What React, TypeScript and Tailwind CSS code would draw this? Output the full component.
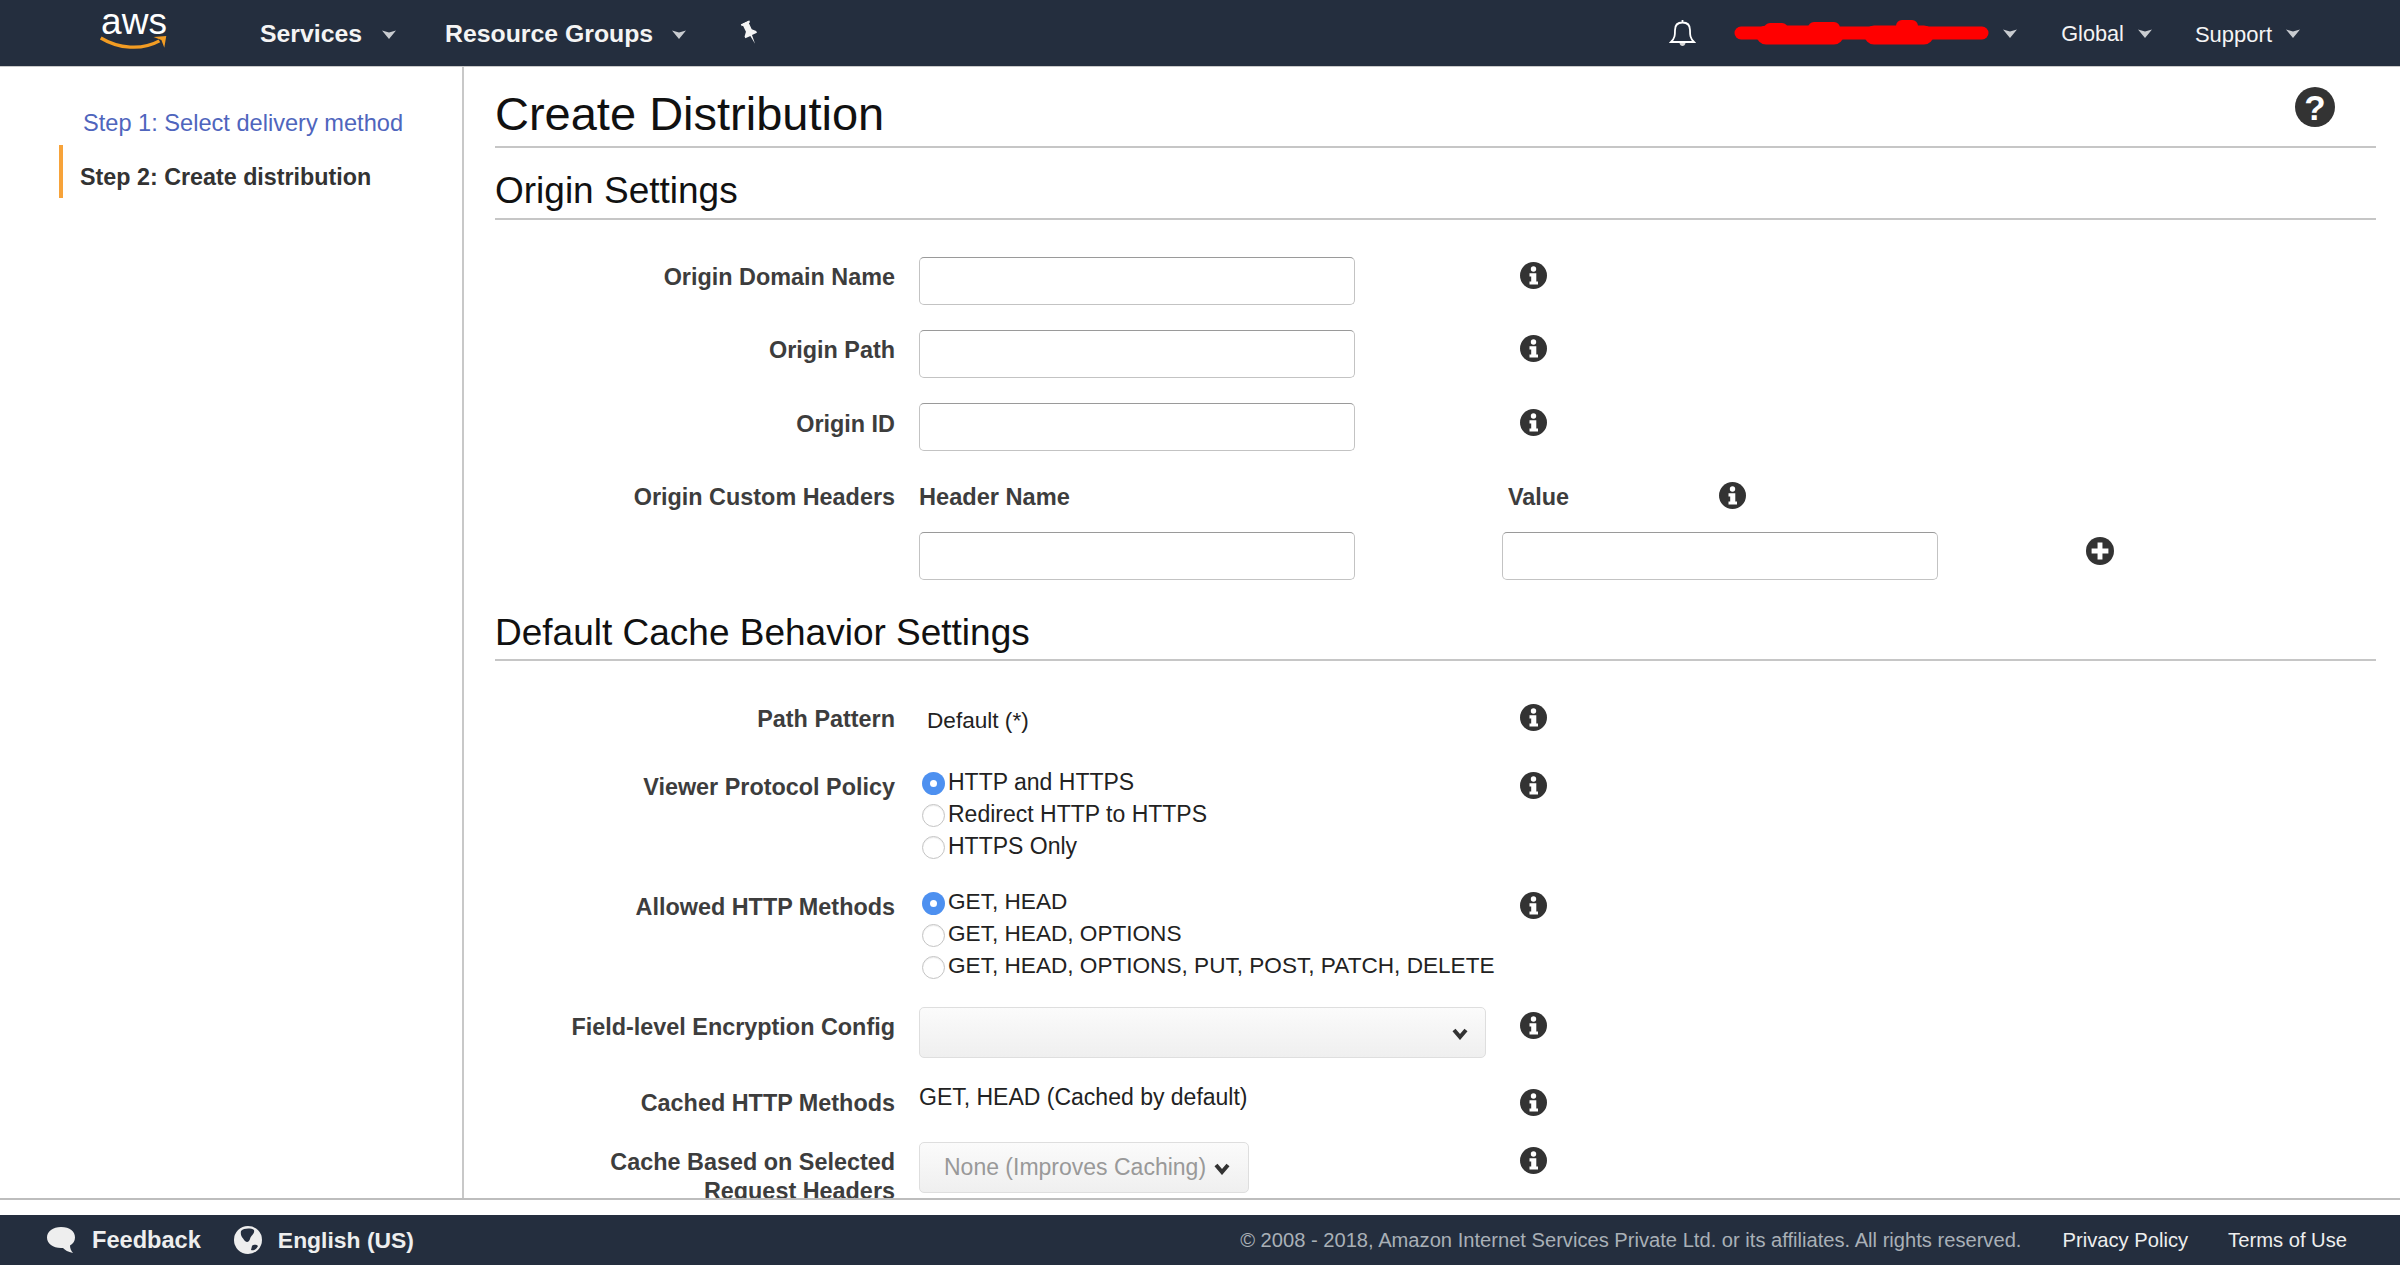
function Caret({ className = "" }: { className?: string }) {
  return (
    <svg width="14" height="9" viewBox="0 0 14 9" className={className}>
      <path d="M0 0.5 L7 2.5 L14 0.5 L7 9 Z" fill="#c9ccd0" />
    </svg>
  );
}

function Chevron() {
  return (
    <svg width="18" height="12" viewBox="0 0 18 12" className="shrink-0">
      <path d="M3 2 L9 9 L15 2" fill="none" stroke="#333" strokeWidth="4" />
    </svg>
  );
}

function Info() {
  return (
    <svg width="27" height="27" viewBox="0 0 27 27" className="block">
      <circle cx="13.5" cy="13.5" r="13.5" fill="#333" />
      <circle cx="13.5" cy="7" r="2.7" fill="#fff" />
      <path d="M9.5 11.2 H16.3 V19.4 H18 V22.6 H9.5 V19.4 H11.2 V14.4 H9.5 Z" fill="#fff" />
    </svg>
  );
}

function Circled({ size, className = "", children }: { size: number; className?: string; children: React.ReactNode }) {
  return (
    <svg width={size} height={size} viewBox="0 0 40 40" className={className}>
      <circle cx="20" cy="20" r="20" fill="#333" />
      {children}
    </svg>
  );
}

function Radio({ checked = false }: { checked?: boolean }) {
  if (checked) {
    return (
      <span className="w-[23px] h-[23px] rounded-full bg-[#4d90f0] flex items-center justify-center shrink-0">
        <span className="w-[7px] h-[7px] rounded-full bg-white" />
      </span>
    );
  }
  return <span className="w-[23px] h-[23px] rounded-full border border-[#c4c4c4] bg-white shadow-[inset_0_1px_1px_rgba(0,0,0,0.08)] shrink-0" />;
}

function RadioList({ items, textSize }: { items: string[]; textSize: string }) {
  return (
    <div className="flex flex-col gap-[2px]">
      {items.map((item, index) => (
        <div key={item} className={`flex items-center h-[30px] ml-[3px] leading-[30px] text-[#222] ${textSize}`}>
          <Radio checked={index === 0} />
          <span className="ml-[3px] mb-[3px] whitespace-nowrap">{item}</span>
        </div>
      ))}
    </div>
  );
}

function TextBox({ width }: { width: string }) {
  return <input className={`${width} h-[48px] block rounded-[5px] border border-[#c3c3c3] border-t-[#9a9a9a] bg-white`} />;
}

function SectionTitle({ title, pt, pb }: { title: string; pt: string; pb: string }) {
  return (
    <div className={`${pt} ${pb} border-b-[2px] border-[#c6c6c6]`}>
      <h2 className="text-[37px] leading-[44px] text-[#111]">{title}</h2>
    </div>
  );
}

function Row({ label, top, labelPt, infoPt, children }: { label: React.ReactNode; top: string; labelPt: string; infoPt: string; children: React.ReactNode }) {
  return (
    <div className={`flex items-start ${top}`}>
      <div className={`w-[400px] shrink-0 text-right font-bold text-[23.4px] leading-[30px] text-[#3d3d3d] ${labelPt}`}>{label}</div>
      <div className="ml-[24px] w-[601px] shrink-0">{children}</div>
      <div className={infoPt}>
        <Info />
      </div>
    </div>
  );
}

function TopBar() {
  return (
    <header className="h-[67px] shrink-0 bg-[#242e3e] border-b border-[#c9c9c9] flex items-center pl-[100px] pr-[100px] text-[#f4f4f4]">
      <div className="w-[68px] h-[42px] mb-[6px] flex flex-col items-center">
        <span className="text-[37px] leading-[26px] text-white h-[28px]">aws</span>
        <svg width="68" height="16" viewBox="0 0 68 16" className="-mt-[1px]">
          <path d="M0 3 C18 14 42 16 60 6" fill="none" stroke="#f29c23" strokeWidth="3.4" />
          <path d="M54 2 L67 1 L65 13 L62 5 Z" fill="#f29c23" />
        </svg>
      </div>
      <span className="ml-[92px] pt-[2px] font-bold text-[24.8px]">Services</span>
      <Caret className="ml-[20px] mt-[2px]" />
      <span className="ml-[49px] pt-[2px] font-bold text-[24.8px]">Resource Groups</span>
      <Caret className="ml-[19px] mt-[2px]" />
      <svg width="22" height="24" viewBox="0 0 24 26" className="ml-[53px] -rotate-[25deg]">
        <path d="M7 0 H17 V2.5 H15.5 V10 L19 14 V16 H13 L12 26 L11 16 H5 V14 L8.5 10 V2.5 H7 Z" fill="#f4f4f4" />
      </svg>
      <svg width="27" height="28" viewBox="0 0 27 28" className="ml-auto">
        <path d="M2 23 C6 19 6 16 6 11 C6 6 9 3.5 13.5 3.5 C18 3.5 21 6 21 11 C21 16 21 19 25 23 Z M13.5 1 V3.5" fill="none" stroke="#fff" strokeWidth="1.8" />
        <path d="M10.5 24 H16.5 C16 28 11 28 10.5 24 Z" fill="#d8d8d8" />
      </svg>
      <svg width="255" height="26" viewBox="0 0 255 26" className="ml-[38px]">
        <path d="M7 13 H248" fill="none" stroke="#ff0000" strokeWidth="13" strokeLinecap="round" />
        <path d="M32 15 H100 M140 15 H190" fill="none" stroke="#ff0000" strokeWidth="19" strokeLinecap="round" />
        <path d="M36 9 H48 M80 8 H100 M168 6 H178" fill="none" stroke="#ff0000" strokeWidth="12" strokeLinecap="round" />
      </svg>
      <Caret className="ml-[14px]" />
      <span className="ml-[44px] text-[21.7px] pt-[2px]">Global</span>
      <Caret className="ml-[14px]" />
      <span className="ml-[43px] text-[22px] pt-[2px]">Support</span>
      <Caret className="ml-[14px]" />
    </header>
  );
}

function SideNav() {
  return (
    <aside className="w-[464px] shrink-0 border-r-[2px] border-[#c8c8c8] pt-[41px]">
      <a className="block ml-[83px] text-[23.6px] leading-[30px] text-[#4f65bd]">Step 1: Select delivery method</a>
      <div className="ml-[59px] mt-[7px] h-[53px] pl-[17px] pt-[11px] border-l-[4px] border-[#f7a33a] flex items-center font-bold text-[23.3px] text-[#333]">
        Step 2: Create distribution
      </div>
    </aside>
  );
}

function Form() {
  return (
    <div className="flex-1 min-w-0 pl-[31px] pr-[24px]">
      <div className="h-[81px] pt-[19px] border-b-[2px] border-[#c6c6c6] flex justify-between items-start">
        <h1 className="text-[47px] leading-[56px] text-[#111]">Create Distribution</h1>
        <Circled size={40} className="mt-[1px] mr-[41px]">
          <text x="20" y="33" textAnchor="middle" fontSize="35" fontWeight="700" fill="#fff">?</text>
        </Circled>
      </div>
      <SectionTitle title="Origin Settings" pt="pt-[21px]" pb="pb-[5px]" />

      <Row label="Origin Domain Name" top="mt-[37px]" labelPt="pt-[5px]" infoPt="pt-[5px]">
        <TextBox width="w-[436px]" />
      </Row>
      <Row label="Origin Path" top="mt-[25px]" labelPt="pt-[5px]" infoPt="pt-[5px]">
        <TextBox width="w-[436px]" />
      </Row>
      <Row label="Origin ID" top="mt-[25px]" labelPt="pt-[6px]" infoPt="pt-[6px]">
        <TextBox width="w-[436px]" />
      </Row>

      <div className="flex items-start mt-[25px] pt-[6px] h-[56px] text-[23.4px] leading-[30px] font-bold text-[#3d3d3d]">
        <div className="w-[400px] text-right shrink-0">Origin Custom Headers</div>
        <div className="ml-[24px] w-[589px] shrink-0 text-[23.6px]">Header Name</div>
        <div className="w-[211px] shrink-0">Value</div>
        <Info />
      </div>
      <div className="flex items-center ml-[424px]">
        <TextBox width="w-[436px]" />
        <div className="ml-[147px]">
          <TextBox width="w-[436px]" />
        </div>
        <Circled size={28} className="ml-[148px] -mt-[11px]">
          <path d="M16.5 8 H23.5 V16.5 H32 V23.5 H23.5 V32 H16.5 V23.5 H8 V16.5 H16.5 Z" fill="#fff" />
        </Circled>
      </div>

      <SectionTitle title="Default Cache Behavior Settings" pt="pt-[31px]" pb="pb-[4px]" />

      <Row label="Path Pattern" top="mt-[43px]" labelPt="" infoPt="">
        <div className="ml-[8px] mt-[2px] text-[22.6px] leading-[30px] text-[#222]">Default (*)</div>
      </Row>
      <Row label="Viewer Protocol Policy" top="mt-[32px]" labelPt="pt-[4px]" infoPt="pt-[4px]">
        <RadioList textSize="text-[23px]" items={["HTTP and HTTPS", "Redirect HTTP to HTTPS", "HTTPS Only"]} />
      </Row>
      <Row label="Allowed HTTP Methods" top="mt-[26px]" labelPt="pt-[4px]" infoPt="pt-[4px]">
        <RadioList textSize="text-[22.6px]" items={["GET, HEAD", "GET, HEAD, OPTIONS", "GET, HEAD, OPTIONS, PUT, POST, PATCH, DELETE"]} />
      </Row>
      <Row label="Field-level Encryption Config" top="mt-[25px]" labelPt="pt-[5px]" infoPt="pt-[5px]">
        <div className="w-[567px] h-[51px] rounded-[5px] border border-[#dedede] bg-gradient-to-b from-[#fbfbfb] to-[#efefef] flex items-center justify-end pr-[16px] pt-[3px]">
          <Chevron />
        </div>
      </Row>
      <Row label="Cached HTTP Methods" top="mt-[24px]" labelPt="pt-[6px]" infoPt="pt-[7px]">
        <div className="text-[23px] leading-[30px] text-[#222]">GET, HEAD (Cached by default)</div>
      </Row>
      <Row
        label={
          <span className="block leading-[29px]">
            Cache Based on Selected
            <br />
            Request Headers
          </span>
        }
        top="mt-[24px]"
        labelPt="pt-[6px]"
        infoPt="pt-[5px]"
      >
        <div className="w-[330px] h-[51px] rounded-[5px] border border-[#dedede] bg-gradient-to-b from-[#fbfbfb] to-[#efefef] flex items-center pl-[24px] text-[23px] text-[#999]">
          <span className="whitespace-nowrap">None (Improves Caching)</span>
          <span className="ml-[7px] pt-[3px]">
            <Chevron />
          </span>
        </div>
      </Row>
    </div>
  );
}

function Footer() {
  return (
    <footer className="mt-[15px] h-[50px] shrink-0 bg-[#242e3e] flex items-center pl-[47px] pr-[53px] text-[#eeeeee]">
      <svg width="28" height="26" viewBox="0 0 28 26">
        <path d="M14 0 C23 0 28 4.5 28 10.5 C28 14 26 17 23 18.5 C23 21 24 24 26 26 C21 25 18 23 16 21 H14 C6 21 0 16.5 0 10.5 C0 4.5 6 0 14 0 Z" fill="#eeeeee" />
      </svg>
      <span className="ml-[17px] pt-[1px] font-bold text-[23.6px]">Feedback</span>
      <svg width="28" height="28" viewBox="0 0 28 28" className="ml-[33px]">
        <circle cx="14" cy="14" r="14" fill="#eeeeee" />
        <path d="M7 5 C10 2 17 2 20 4 C21 8 17 9 16 13 C15 16 13 17 11 15 C9 12 6 10 7 5 Z M18 20 C20 18 23 19 24 20 C22 24 19 25 17 24 Z" fill="#242e3e" />
      </svg>
      <span className="ml-[16px] pt-[1px] font-bold text-[22.9px]">English (US)</span>
      <span className="ml-auto text-[20.15px] text-[#a9b0b7]">© 2008 - 2018, Amazon Internet Services Private Ltd. or its affiliates. All rights reserved.</span>
      <span className="ml-[41px] text-[20.2px]">Privacy Policy</span>
      <span className="ml-[40px] text-[20.2px]">Terms of Use</span>
    </footer>
  );
}

export default function App() {
  return (
    <div className="h-[1265px] flex flex-col overflow-hidden bg-white [font-family:'Liberation_Sans',Arial,sans-serif]">
      <TopBar />
      <main className="h-[1133px] shrink-0 flex overflow-hidden border-b-[2px] border-[#bdbdbd]">
        <SideNav />
        <Form />
      </main>
      <Footer />
    </div>
  );
}
